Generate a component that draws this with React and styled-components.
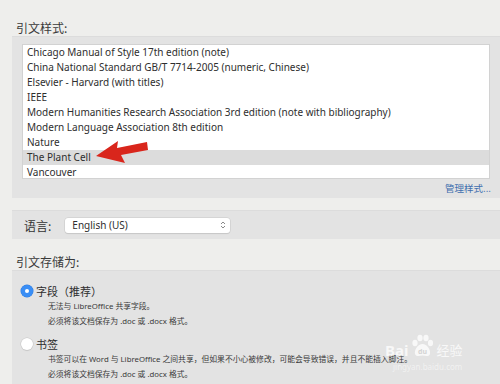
import React from 'react'
import styled, {createGlobalStyle, css} from 'styled-components'

const GlobalStyle = createGlobalStyle`
html, body {
  margin: 0;
  padding: 0;
  background: #eeeeec;
}
body {
  font-family: "Noto Sans", "Noto Sans CJK SC", sans-serif;
  color: #2b2b2b;
}
`

const styles = [
  'Chicago Manual of Style 17th edition (note)',
  'China National Standard GB/T 7714-2005 (numeric, Chinese)',
  'Elsevier - Harvard (with titles)',
  'IEEE',
  'Modern Humanities Research Association 3rd edition (note with bibliography)',
  'Modern Language Association 8th edition',
  'Nature',
  'The Plant Cell',
  'Vancouver',
]

const App = () => {
  return (
    <>
      <GlobalStyle />
      <Page>
        <SectionLabel top={20}>引文样式:</SectionLabel>
        <Group>
          <List>
            {styles.map(s => (
              <Row key={s} selected={s === 'The Plant Cell'}>{s}</Row>
            ))}
          </List>
          <ManageLink>管理样式...</ManageLink>
        </Group>

        <LangGroup>
          <LangLabel>语言:</LangLabel>
          <Select>
            <span>English (US)</span>
            <svg width="6" height="10" viewBox="0 0 6 10">
              <path d="M1 4 L3 2 L5 4 M1 6 L3 8 L5 6" fill="none" stroke="#8a8a8a" strokeWidth="1" />
            </svg>
          </Select>
        </LangGroup>

        <SectionLabel top={15}>引文存储为:</SectionLabel>
        <Group pad>
          <Option>
            <Radio checked />
            <OptionText>字段（推荐）</OptionText>
          </Option>
          <Note>无法与 LibreOffice 共享字段。</Note>
          <Note>必须将该文档保存为 .doc 或 .docx 格式。</Note>
          <Option spaced>
            <Radio />
            <OptionText>书签</OptionText>
          </Option>
          <Note>书签可以在 Word 与 LibreOffice 之间共享，但如果不小心被修改，可能会导致错误，并且不能插入脚注。</Note>
          <Note>必须将该文档保存为 .doc 或 .docx 格式。</Note>
        </Group>

        <Arrow width="60" height="30" viewBox="90 138 60 30">
          <polygon points="96,156 118,141 117,148 147,142 148,150 121,155 125,163" fill="#d9261c" />
        </Arrow>

        <Watermark>
          <Brand>
            <span>Bai</span>
            <svg width="24" height="26" viewBox="0 0 24 26">
              <g fill="#fff">
                <ellipse cx="5" cy="10" rx="2.6" ry="3.2" />
                <ellipse cx="10" cy="5" rx="2.6" ry="3.2" />
                <ellipse cx="16" cy="5" rx="2.6" ry="3.2" />
                <ellipse cx="20.5" cy="10" rx="2.6" ry="3.2" />
                <path d="M12.5 11 C8 11 4 17 5 21 C6 24 10 23 12.5 22.5 C15 23 19 24 20 21 C21 17 17 11 12.5 11 Z" />
              </g>
              <text x="8" y="21" fontSize="7" fill="#d0d0d0" fontFamily="Noto Sans">du</text>
            </svg>
            <span>经验</span>
          </Brand>
          <Domain>jingyan.baidu.com</Domain>
        </Watermark>
      </Page>
    </>
  )
}

export default App

const Page = styled.div`
position: relative;
width: 500px;
height: 384px;
overflow: hidden;
display: flex;
flex-direction: column;
`

const SectionLabel = styled.div`
padding: ${p => p.top}px 0 0 16px;
font-size: 12px;
line-height: 16px;
color: #3a3a3a;
font-family: "Noto Sans CJK SC", sans-serif;
`

const Group = styled.div`
margin-left: 12px;
background: #e3e3e3;
border-top: 1px solid #dcdcdc;
padding: 7px 10px 3px 10px;
display: flex;
flex-direction: column;

${p => p.pad && css`
  flex: 1;
  padding: 12px 10px 0 9px;
`}
`

const List = styled.div`
background: #fff;
border: 1px solid #d2d2d2;
height: 135px;
box-sizing: border-box;
`

const Row = styled.div`
height: 15px;
line-height: 15px;
padding-left: 4px;
font-size: 10px;
color: #2e2e2e;
white-space: nowrap;
background: ${p => (p.selected ? '#dcdcdc' : 'transparent')};
`

const ManageLink = styled.div`
align-self: flex-end;
margin: 2px -1px 0 0;
font-size: 9.5px;
line-height: 14px;
color: #3f6fae;
font-family: "Noto Sans CJK SC", sans-serif;
`

const LangGroup = styled.div`
margin: 12px 0 0 12px;
height: 29px;
background: #e3e3e3;
border-top: 1px solid #dcdcdc;
box-sizing: border-box;
display: flex;
align-items: center;
padding-left: 12px;
gap: 14px;
`

const LangLabel = styled.span`
font-size: 12px;
color: #333;
font-family: "Noto Sans CJK SC", sans-serif;
`

const Select = styled.div`
width: 165px;
height: 15px;
box-sizing: border-box;
background: #fff;
border-radius: 3px;
box-shadow: 0 0 0 0.5px #c8c8c8, 0 1px 1px rgba(0,0,0,0.12);
display: flex;
align-items: center;
justify-content: space-between;
padding: 0 4px 0 7px;
font-size: 10px;
color: #2e2e2e;
`

const Option = styled.div`
display: flex;
align-items: center;
gap: 3px;
height: 16px;

${p => p.spaced && css`
  margin-top: 7px;
`}
`

const Radio = styled.span`
width: 12px;
height: 12px;
border-radius: 50%;
box-sizing: border-box;
position: relative;
background: #fff;
box-shadow: 0 0 0 0.5px #c4c4c4, 0 1px 1px rgba(0,0,0,0.1);

${p => p.checked && css`
  background: #3a8ef5;
  box-shadow: 0 0 0 0.5px #2f7de0;
  &::after {
    content: '';
    position: absolute;
    left: 4px;
    top: 4px;
    width: 4px;
    height: 4px;
    border-radius: 50%;
    background: #fff;
  }
`}
`

const OptionText = styled.span`
font-size: 11px;
color: #2e2e2e;
font-family: "Noto Sans CJK SC", sans-serif;
`

const Note = styled.div`
padding-left: 27px;
font-size: 7.8px;
line-height: 15px;
color: #3a3a3a;
white-space: nowrap;
font-family: "Noto Sans", "Noto Sans CJK SC", sans-serif;
`

const Arrow = styled.svg`
position: absolute;
left: 90px;
top: 138px;
`

const Watermark = styled.div`
position: absolute;
left: 385px;
top: 333px;
display: flex;
flex-direction: column;
align-items: flex-start;
opacity: 0.75;
pointer-events: none;
`

const Brand = styled.div`
display: flex;
align-items: flex-end;
gap: 2px;
color: #fff;
font-family: "Noto Sans", "Noto Sans CJK SC", sans-serif;
font-size: 15px;
line-height: 18px;
font-weight: bold;

span:last-child {
  font-size: 13px;
  font-weight: normal;
}
`

const Domain = styled.div`
margin: 2px 0 0 8px;
font-size: 8px;
color: rgba(255,255,255,0.7);
font-family: "Noto Sans", sans-serif;
`
